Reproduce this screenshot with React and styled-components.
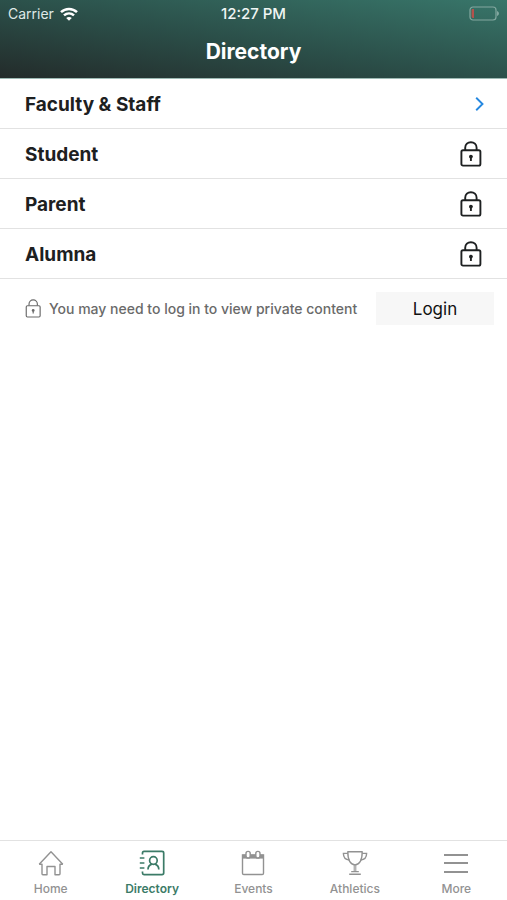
import React from "react";
import styled, { createGlobalStyle } from "styled-components";

const GlobalStyle = createGlobalStyle`
  * {
    box-sizing: border-box;
  }
  body {
    margin: 0;
    background: #fff;
    color: #1d2021;
    font-family: Inter, "Liberation Sans", sans-serif;
  }
`;

const Screen = styled.div`
  display: flex;
  flex-direction: column;
  min-height: 100vh;
`;

const Header = styled.header`
  background: linear-gradient(to top right, #232b2a 0%, #2b4f49 48%, #38766a 100%);
  border-bottom: 1px solid #9dbab4;
  color: #fff;
`;

const StatusBar = styled.div`
  display: grid;
  grid-template-columns: 1fr auto 1fr;
  align-items: center;
  height: 27px;
  padding: 0 8px;
  font-size: 14px;
`;

const Carrier = styled.span`
  display: flex;
  align-items: center;
  gap: 6px;
  color: #dfe9e7;
`;

const Clock = styled.span`
  color: #eff5f4;
  font-size: 15px;
  font-weight: 500;
`;

const BatteryIcon = styled.svg`
  justify-self: end;
`;

const Title = styled.h1`
  margin: 0;
  padding: 11px 0 12px;
  font-size: 21px;
  font-weight: 700;
  line-height: 28px;
  text-align: center;
`;

const Main = styled.main`
  flex: 1;
`;

const List = styled.ul`
  margin: 0;
  padding: 0;
  list-style: none;
`;

const Row = styled.li`
  border-bottom: 1px solid #e2e2e2;
`;

const RowLink = styled.a`
  display: flex;
  align-items: center;
  justify-content: space-between;
  height: 49px;
  padding: 0 23px 0 25px;
  color: inherit;
  font-size: 19px;
  font-weight: 700;
  text-decoration: none;
`;

const RowName = styled.span`
  padding-top: 2px;
`;

const Notice = styled.div`
  display: flex;
  align-items: center;
  justify-content: space-between;
  padding: 13px 13px 13px 25px;
`;

const NoticeText = styled.p`
  display: flex;
  align-items: center;
  gap: 6px;
  margin: 0;
  color: #6a6a6a;
  font-size: 14px;
  font-weight: 500;
  white-space: nowrap;
`;

const LoginButton = styled.button`
  width: 118px;
  height: 33px;
  padding: 0;
  border: 0;
  background: #f7f7f7;
  color: #111;
  font-family: inherit;
  font-size: 17px;
`;

const TabBar = styled.nav`
  display: grid;
  grid-template-columns: repeat(5, 1fr);
  height: 60px;
  border-top: 1px solid #e2e2e2;
`;

const Tab = styled.a`
  display: flex;
  flex-direction: column;
  align-items: center;
  gap: 4px;
  padding-top: 8px;
  color: ${(props) => (props.$active ? "#3b7b67" : "#929292")};
  font-size: 12px;
  font-weight: ${(props) => (props.$active ? 600 : 500)};
  line-height: 16px;
  text-decoration: none;
`;

const TabIcon = styled.svg.attrs({
  viewBox: "0 0 28 28",
  width: 28,
  height: 28,
  fill: "none",
  stroke: "currentColor",
  strokeWidth: 1.4,
  "aria-hidden": true,
})`
  display: block;
`;

function WifiIcon() {
  return (
    <svg width="18" height="14" viewBox="0 0 18 14" fill="none" stroke="#fff" strokeWidth="2.5" aria-hidden="true">
      <path d="M1 5.2C5.5 0.8 12.5 0.8 17 5.2" />
      <path d="M4 8.4C6.9 5.7 11.1 5.7 14 8.4" />
      <path d="M9 13.8L6.2 11C7.8 9.5 10.2 9.5 11.8 11Z" fill="#fff" stroke="none" />
    </svg>
  );
}

function Battery() {
  return (
    <BatteryIcon width="30" height="15" viewBox="0 0 30 15" fill="none" aria-hidden="true">
      <rect x="1" y="1" width="26" height="13" rx="3" stroke="#83a8a0" strokeWidth="1.2" />
      <path d="M28 5C30.6 6 30.6 9 28 10Z" fill="#83a8a0" />
      <path d="M5 3V12H4C3 12 2.6 11.5 2.6 10.6V4.4C2.6 3.5 3 3 4 3Z" fill="#b5524c" />
    </BatteryIcon>
  );
}

function LockIcon({ width = 24, height = 26, strokeWidth = 1.9 }) {
  return (
    <svg width={width} height={height} viewBox="0 0 24 26" fill="none" stroke="currentColor" strokeWidth={strokeWidth} aria-hidden="true">
      <rect x="1.4" y="9.2" width="19" height="15.4" rx="1.6" />
      <path d="M5.2 9V6.8C5.2 3.6 7.7 1.2 10.9 1.2S16.6 3.6 16.6 6.8V9" />
      <circle cx="10.9" cy="15.6" r="1.9" fill="currentColor" stroke="none" />
      <path d="M10.9 16V20" />
    </svg>
  );
}

function Chevron() {
  return (
    <svg width="9" height="16" viewBox="0 0 9 16" fill="none" stroke="#2588e0" strokeWidth="1.9" aria-hidden="true">
      <path d="M1.2 1.8L7.5 8L1.2 14.2" />
    </svg>
  );
}

const groups = [
  { name: "Faculty & Staff" },
  { name: "Student", locked: true },
  { name: "Parent", locked: true },
  { name: "Alumna", locked: true },
];

const tabs = [
  {
    name: "Home",
    icon: (
      <>
        <path d="M2.2 15.2L14 2.8L25.8 15.2" strokeLinejoin="round" />
        <path d="M2.2 15.2H5V24.8C5 25.4 5.3 25.7 5.9 25.7H10V17.5H18V25.7H22.1C22.7 25.7 23 25.4 23 24.8V15.2H25.8" strokeLinejoin="round" />
      </>
    ),
  },
  {
    name: "Directory",
    icon: (
      <g strokeWidth="1.7">
        <path d="M4.5 5.5V4C4.5 3 5 2.4 6 2.4H24C25 2.4 25.7 3 25.7 4V24C25.7 25 25 25.6 24 25.6H6C5 25.6 4.5 25 4.5 24V22.5" />
        <path d="M1.8 9H6.4M1.8 14H6.4M1.8 19H6.4" />
        <circle cx="15.4" cy="11.5" r="3.8" />
        <path d="M10 20.6C10 17.6 11.6 15.8 13.8 15.1M17 15.1C19.2 15.8 20.8 17.6 20.8 20.6" />
      </g>
    ),
  },
  {
    name: "Events",
    icon: (
      <>
        <path d="M3.5 6H24.5V24.2C24.5 25 24 25.5 23.2 25.5H4.8C4 25.5 3.5 25 3.5 24.2Z" />
        <path d="M3.5 5.6H24.5V9.6H3.5Z" fill="currentColor" stroke="none" />
        <rect x="7" y="2.4" width="4.2" height="6.6" rx="2.1" fill="#fff" />
        <rect x="16.8" y="2.4" width="4.2" height="6.6" rx="2.1" fill="#fff" />
      </>
    ),
  },
  {
    name: "Athletics",
    icon: (
      <>
        <path d="M6.8 2.7H21.2C21.2 10.5 19 15.3 14 15.9C9 15.3 6.8 10.5 6.8 2.7Z" strokeLinejoin="round" />
        <path d="M6.9 4.4H2.4C2.4 8.4 4.4 10.6 8.4 11M21.1 4.4H25.6C25.6 8.4 23.6 10.6 19.6 11" />
        <path d="M13.2 16V22.6M14.8 16V22.6" strokeWidth="1" />
        <path d="M10.2 22.6H17.8M8.2 25.2H19.8" />
      </>
    ),
  },
  {
    name: "More",
    icon: <path d="M2 6H26M2 14H26M2 23H26" strokeWidth="2" />,
  },
];

export default function App() {
  return (
    <Screen>
      <GlobalStyle />
      <Header>
        <StatusBar>
          <Carrier>
            Carrier
            <WifiIcon />
          </Carrier>
          <Clock>12:27 PM</Clock>
          <Battery />
        </StatusBar>
        <Title>Directory</Title>
      </Header>
      <Main>
        <List>
          {groups.map((group) => (
            <Row key={group.name}>
              <RowLink href="#">
                <RowName>{group.name}</RowName>
                {group.locked ? <LockIcon /> : <Chevron />}
              </RowLink>
            </Row>
          ))}
        </List>
        <Notice>
          <NoticeText>
            <LockIcon width={18} height={19} strokeWidth={1.6} />
            You may need to log in to view private content
          </NoticeText>
          <LoginButton type="button">Login</LoginButton>
        </Notice>
      </Main>
      <TabBar>
        {tabs.map((tab) => (
          <Tab key={tab.name} href="#" $active={tab.name === "Directory"}>
            <TabIcon>{tab.icon}</TabIcon>
            {tab.name}
          </Tab>
        ))}
      </TabBar>
    </Screen>
  );
}
